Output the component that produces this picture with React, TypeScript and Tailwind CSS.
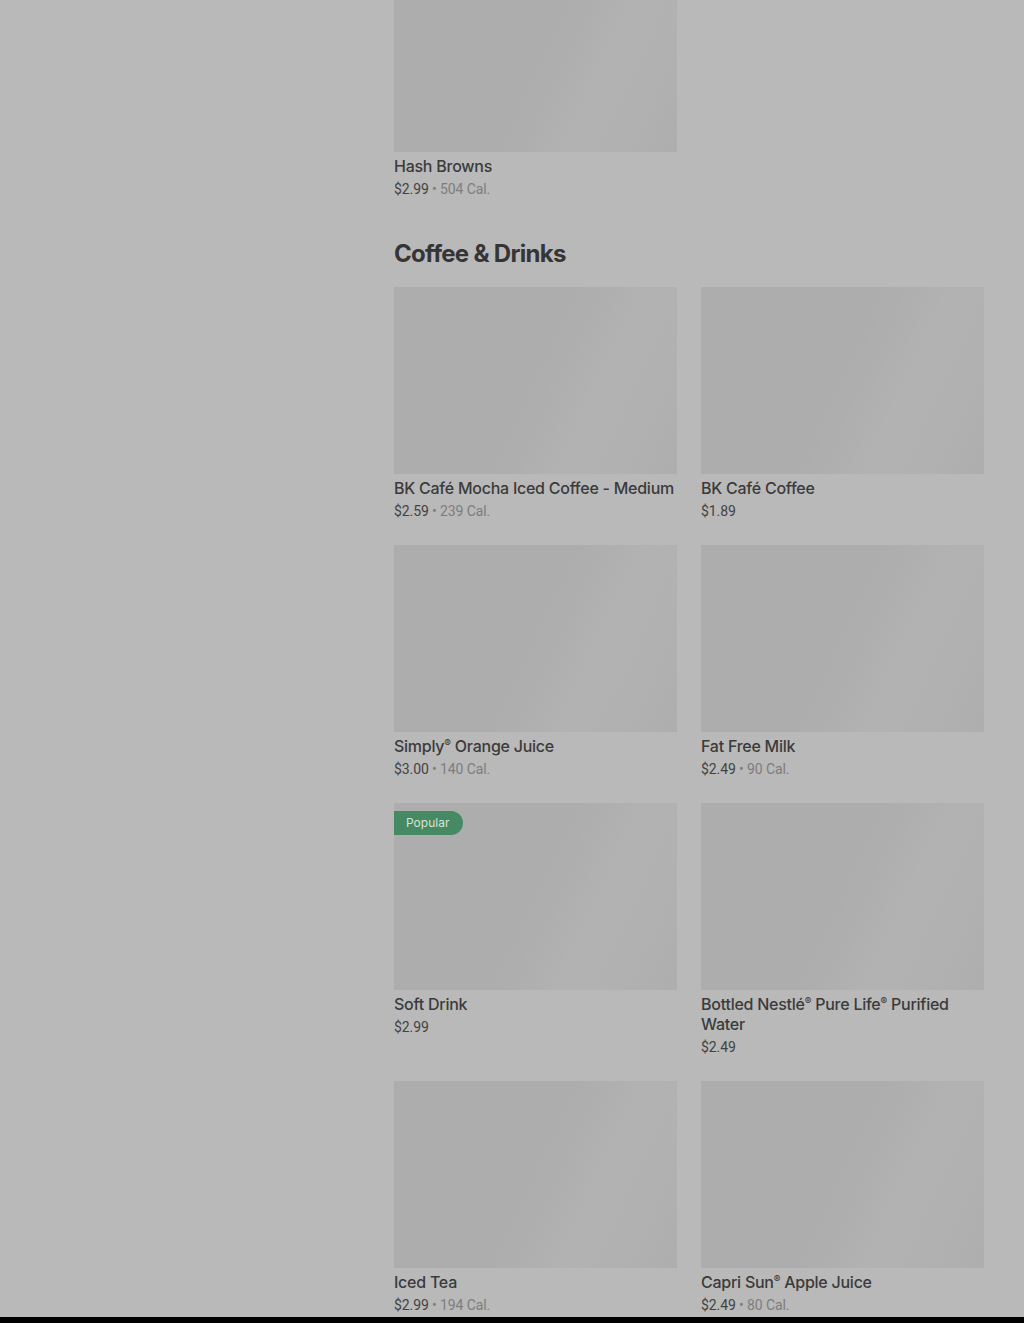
import React from 'react';

type Item = { name: string; price: string; cal?: string; popular?: boolean };

const drinks: Item[] = [
    { name: 'BK Café Mocha Iced Coffee - Medium', price: '$2.59', cal: '239 Cal.' },
    { name: 'BK Café Coffee', price: '$1.89' },
    { name: 'Simply® Orange Juice', price: '$3.00', cal: '140 Cal.' },
    { name: 'Fat Free Milk', price: '$2.49', cal: '90 Cal.' },
    { name: 'Soft Drink', price: '$2.99', popular: true },
    { name: 'Bottled Nestlé® Pure Life® Purified Water', price: '$2.49' },
    { name: 'Iced Tea', price: '$2.99', cal: '194 Cal.' },
    { name: 'Capri Sun® Apple Juice', price: '$2.49', cal: '80 Cal.' },
];

const shimmer =
    'bg-[linear-gradient(115deg,#adadad_0%,#adadad_50%,#b2b2b2_68%,#b1b1b1_85%,#aeaeae_100%)]';

// registered marks are rendered small and raised, like the reference
const renderName = (name: string) =>
    name.split('®').map((part, i, arr) => (
        <React.Fragment key={i}>
            {part}
            {i < arr.length - 1 && (
                <span className="relative -top-[5px] text-[10px] leading-none">®</span>
            )}
        </React.Fragment>
    ));

const MenuCard = ({ item, imgClass }: { item: Item; imgClass: string }) => (
    <div className="flex flex-col">
        <div className={`relative w-full ${imgClass} ${shimmer}`}>
            {item.popular && (
                <span
                    className="absolute left-0 top-2 h-6 pl-3 pr-[14px] flex items-center rounded-r-full bg-[#468a63] text-[12px] text-[#d3e3d8]"
                    style={{ fontFamily: 'Inter, Roboto, sans-serif' }}
                >
                    Popular
                </span>
            )}
        </div>
        <p
            className="mt-[4px] text-[16px] leading-5 font-medium tracking-[-0.25px] text-[#3b3b3b]"
            style={{ fontFamily: 'Inter, Roboto, sans-serif' }}
        >
            {renderName(item.name)}
        </p>
        <p className="mt-[3px] text-[14px] leading-5 tracking-[-0.1px] text-[#434343]">
            {item.price}
            {item.cal && <span className="text-[#7d7d7d]"> • {item.cal}</span>}
        </p>
    </div>
);

export default function App() {
    return (
        <div className="min-h-[1323px] bg-black" style={{ fontFamily: 'Roboto, "Noto Sans", sans-serif' }}>
            <div className="h-[1317px] bg-[#b9b9b9] overflow-hidden">
                <div className="ml-[394px] w-[590px]">
                    <div className="w-[283px]">
                        <MenuCard
                            item={{ name: 'Hash Browns', price: '$2.99', cal: '504 Cal.' }}
                            imgClass="h-[152px]"
                        />
                    </div>

                    <h2
                        className="mt-[39px] mb-[17px] text-[24px] leading-8 font-bold text-[#353535] tracking-[-0.7px]"
                        style={{ fontFamily: 'Inter, Roboto, sans-serif' }}
                    >
                        Coffee &amp; Drinks
                    </h2>

                    <div className="grid grid-cols-2 gap-x-6 gap-y-6">
                        {drinks.map((d) => (
                            <MenuCard key={d.name} item={d} imgClass="h-[187px]" />
                        ))}
                    </div>
                </div>
            </div>
        </div>
    );
}
